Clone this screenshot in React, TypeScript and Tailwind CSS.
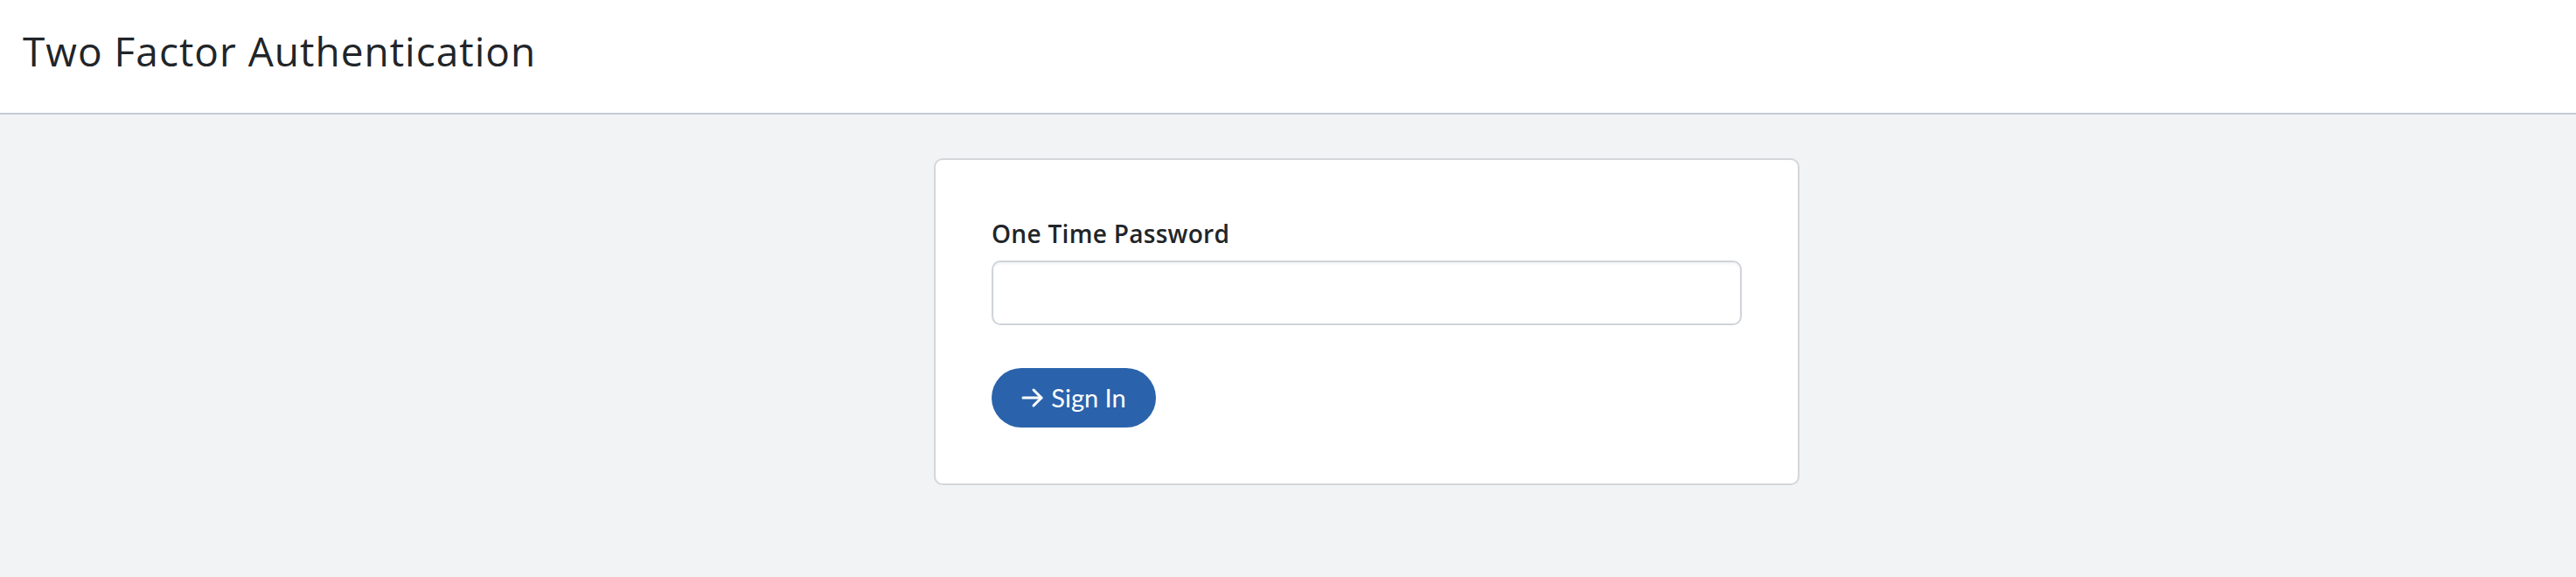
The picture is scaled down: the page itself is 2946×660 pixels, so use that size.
import { useState } from 'react';

export default function App() {
  const [otp, setOtp] = useState('');

  return (
    <div className="min-h-[660px] bg-[#f2f3f5] font-['Lato',sans-serif] text-[#212529]">
      <header className="h-[131px] bg-white border-b-2 border-[#c3cbd5] pl-[26px] pt-[30px]">
        <h1 className="font-['Open_Sans',sans-serif] text-[46px] leading-[56px] font-normal tracking-[1px]">Two Factor Authentication</h1>
      </header>

      <main className="pt-[50px]">
        <div className="ml-[1068px] w-[990px] bg-white border-2 border-[#d4d6d9] rounded-[10px] px-[64px] pt-[64px] pb-[64px]">
          <label htmlFor="otp" className="block font-['Open_Sans',sans-serif] text-[28px] leading-[40px] font-semibold tracking-[0.3px]">
            One Time Password
          </label>
          <input
            id="otp"
            type="text"
            value={otp}
            onChange={(e) => setOtp(e.target.value)}
            className="mt-[11px] block w-full h-[74px] rounded-[10px] border-2 border-[#d0d4d9] px-4 text-[28px] outline-none shadow-[inset_0_2px_3px_rgba(0,0,0,0.05)]"
          />
          <button
            type="button"
            className="mt-[49px] h-[68px] w-[188px] rounded-full bg-[#2a63ab] text-white text-[29px] flex items-center justify-center gap-[8px]"
          >
            <svg width="26" height="24" viewBox="0 0 26 24" fill="none" stroke="currentColor" strokeWidth="3" strokeLinecap="round" strokeLinejoin="round">
              <path d="M2 12h21" />
              <path d="M14 3l9 9-9 9" />
            </svg>
            <span>Sign In</span>
          </button>
        </div>
      </main>
    </div>
  );
}
